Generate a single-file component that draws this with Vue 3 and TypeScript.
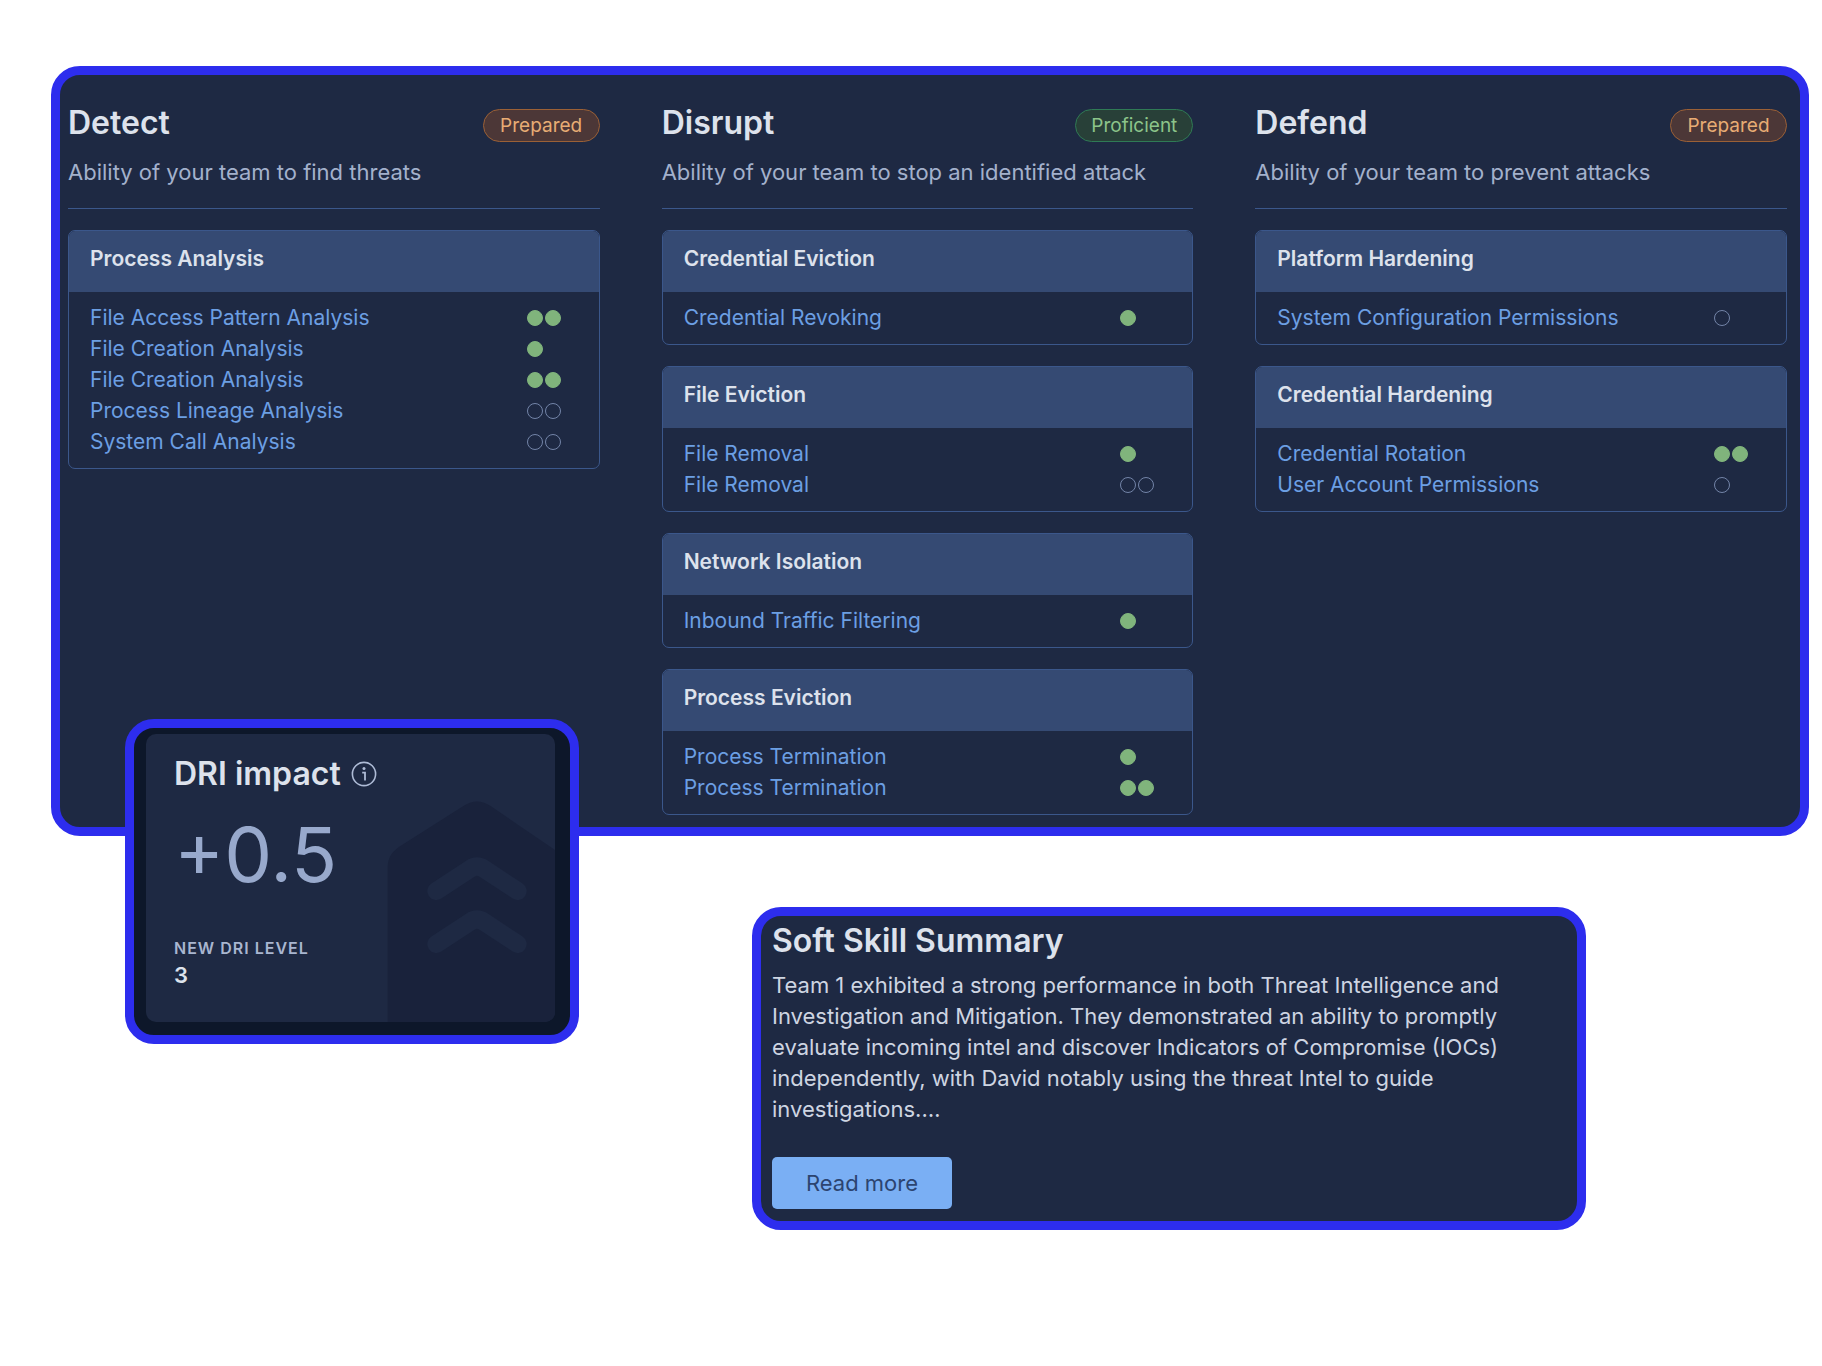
<script setup lang="ts">
interface Skill {
  name: string
  dots: number
  done: boolean
}

interface Group {
  title: string
  skills: Skill[]
}

interface Category {
  title: string
  level: 'Prepared' | 'Proficient'
  description: string
  groups: Group[]
}

const skill = (name: string, dots: number, done: boolean): Skill => ({ name, dots, done })

const categories: Category[] = [
  {
    title: 'Detect',
    level: 'Prepared',
    description: 'Ability of your team to find threats',
    groups: [
      {
        title: 'Process Analysis',
        skills: [
          skill('File Access Pattern Analysis', 2, true),
          skill('File Creation Analysis', 1, true),
          skill('File Creation Analysis', 2, true),
          skill('Process Lineage Analysis', 2, false),
          skill('System Call Analysis', 2, false),
        ],
      },
    ],
  },
  {
    title: 'Disrupt',
    level: 'Proficient',
    description: 'Ability of your team to stop an identified attack',
    groups: [
      { title: 'Credential Eviction', skills: [skill('Credential Revoking', 1, true)] },
      {
        title: 'File Eviction',
        skills: [skill('File Removal', 1, true), skill('File Removal', 2, false)],
      },
      { title: 'Network Isolation', skills: [skill('Inbound Traffic Filtering', 1, true)] },
      {
        title: 'Process Eviction',
        skills: [skill('Process Termination', 1, true), skill('Process Termination', 2, true)],
      },
    ],
  },
  {
    title: 'Defend',
    level: 'Prepared',
    description: 'Ability of your team to prevent attacks',
    groups: [
      {
        title: 'Platform Hardening',
        skills: [skill('System Configuration Permissions', 1, false)],
      },
      {
        title: 'Credential Hardening',
        skills: [skill('Credential Rotation', 2, true), skill('User Account Permissions', 1, false)],
      },
    ],
  },
]
</script>

<template>
  <main class="page">
    <section class="panel board">
      <section v-for="category in categories" :key="category.title" class="category">
        <header class="category-head">
          <div class="category-title">
            <h2 class="heading">{{ category.title }}</h2>
            <span class="pill" :class="category.level.toLowerCase()">{{ category.level }}</span>
          </div>
          <p class="description">{{ category.description }}</p>
        </header>
        <article v-for="group in category.groups" :key="group.title" class="group">
          <h3 class="group-title">{{ group.title }}</h3>
          <ul class="skills">
            <li v-for="(item, index) in group.skills" :key="index" class="skill">
              <a href="#" class="skill-link">{{ item.name }}</a>
              <span class="dots">
                <i v-for="n in item.dots" :key="n" class="dot" :class="{ done: item.done }"></i>
              </span>
            </li>
          </ul>
        </article>
      </section>
    </section>

    <div class="lower">
      <section class="panel impact">
        <div class="impact-card">
          <svg class="impact-art" viewBox="0 0 504 666" aria-hidden="true">
            <path
              d="M2 666V200Q2 160 45 135L228 19Q270 -10 312 19L504 150V666Z"
              fill="#19223b"
            />
            <path
              d="M148 273L250 206Q270 193 290 206L392 273M148 432L250 365Q270 352 290 365L392 432"
              fill="none"
              stroke="#1e2943"
              stroke-width="54"
              stroke-linecap="round"
              stroke-linejoin="round"
            />
          </svg>
          <div class="impact-title">
            <h2 class="heading">DRI impact</h2>
            <svg class="info" viewBox="0 0 26 26" aria-hidden="true">
              <circle cx="13" cy="13" r="11.6" fill="none" stroke="currentColor" stroke-width="1.6" />
              <circle cx="13" cy="7.6" r="1.5" fill="currentColor" />
              <path
                d="M11.2 11.6H14V19.4"
                fill="none"
                stroke="currentColor"
                stroke-width="1.8"
              />
            </svg>
          </div>
          <p class="impact-value">+0.5</p>
          <p class="level-label">NEW DRI LEVEL</p>
          <p class="level-value">3</p>
        </div>
      </section>

      <section class="panel summary">
        <h2 class="heading">Soft Skill Summary</h2>
        <p class="summary-text">
          Team 1 exhibited a strong performance in both Threat Intelligence and Investigation and
          Mitigation. They demonstrated an ability to promptly evaluate incoming intel and discover
          Indicators of Compromise (IOCs) independently, with David notably using the threat Intel to
          guide investigations.…
        </p>
        <button type="button" class="read-more">Read more</button>
      </section>
    </div>
  </main>
</template>

<style>
body {
  margin: 0;
  background: #fff;
}
</style>

<style scoped>
.page {
  padding: 66px 13px 66px 51px;
  font-family: Inter, "Noto Sans", sans-serif;
  font-size: 22px;
  line-height: 31px;
  color: #dde2ec;
}

h2,
h3,
p,
ul {
  margin: 0;
  padding: 0;
}

.panel {
  box-sizing: border-box;
  border: 9px solid #2d2dee;
  border-radius: 29px;
  background: #1e2943;
}

.heading {
  font-size: 32px;
  line-height: 40px;
  font-weight: 600;
}

.board {
  display: grid;
  grid-template-columns: repeat(3, minmax(0, 1fr));
  gap: 62px;
  padding: 28px 13px 12px 8px;
}

.category {
  display: flex;
  flex-direction: column;
  gap: 21px;
}

.category-head {
  border-bottom: 1px solid #3b578b;
  padding-bottom: 20px;
}

.category-title {
  display: flex;
  align-items: center;
  justify-content: space-between;
  margin-bottom: 14px;
}

.pill {
  box-sizing: border-box;
  min-width: 117px;
  margin-top: 4px;
  padding: 0 15px;
  border: 1px solid;
  border-radius: 17px;
  font-size: 19px;
  line-height: 31px;
  text-align: center;
}

.prepared {
  color: #e8ac74;
  background: #4c3737;
  border-color: #9b6036;
}

.proficient {
  color: #8cc48a;
  background: #284038;
  border-color: #2f7a55;
}

.description {
  color: #a3b1cc;
}

.group {
  border: 1px solid #3b578b;
  border-radius: 7px;
  overflow: hidden;
}

.group-title {
  padding: 12px 21px 18px;
  background: #354a73;
  font-size: 21px;
  line-height: 31px;
  font-weight: 600;
}

.skills {
  list-style: none;
  padding: 10px 21px 11px;
  font-size: 21px;
}

.skill {
  display: flex;
  align-items: center;
  justify-content: space-between;
}

.skill-link {
  color: #6c9fe3;
  text-decoration: none;
}

.dots {
  display: flex;
  gap: 2px;
  width: 51px;
}

.dot {
  box-sizing: border-box;
  width: 16px;
  height: 16px;
  border: 1px solid #7384a8;
  border-radius: 50%;
}

.dot.done {
  border-color: #80b47c;
  background: #80b47c;
}

.lower {
  display: flex;
  align-items: flex-start;
  padding-left: 74px;
  gap: 173px;
}

.impact {
  position: relative;
  flex: 0 0 454px;
  margin-top: -117px;
  padding: 6px 15px 13px 12px;
  background: #0d172a;
}

.impact-card {
  position: relative;
  padding: 20px 28px 31px;
  border-radius: 10px;
  background: #1e2943;
  overflow: hidden;
}

.impact-art {
  position: absolute;
  right: 0;
  bottom: 0;
  width: 168px;
  height: 222px;
}

.impact-title {
  display: flex;
  align-items: center;
  gap: 10px;
}

.info {
  width: 26px;
  height: 26px;
  color: #aebbd6;
}

.impact-value {
  margin: 8px 0 30px;
  font-size: 76px;
  line-height: 104px;
  color: #98a9cc;
}

.level-label {
  font-size: 16px;
  line-height: 24px;
  font-weight: 600;
  letter-spacing: 1px;
  color: #a9b6d0;
}

.level-value {
  font-weight: 600;
}

.summary {
  flex: 0 1 834px;
  margin-top: 71px;
  padding: 5px 60px 12px 11px;
}

.summary-text {
  margin: 9px 0 32px;
  color: #ced5e2;
}

.read-more {
  display: block;
  min-width: 180px;
  height: 52px;
  padding: 0 24px;
  border: 0;
  border-radius: 5px;
  background: #7aaff4;
  color: #2c4470;
  font: inherit;
}
</style>
